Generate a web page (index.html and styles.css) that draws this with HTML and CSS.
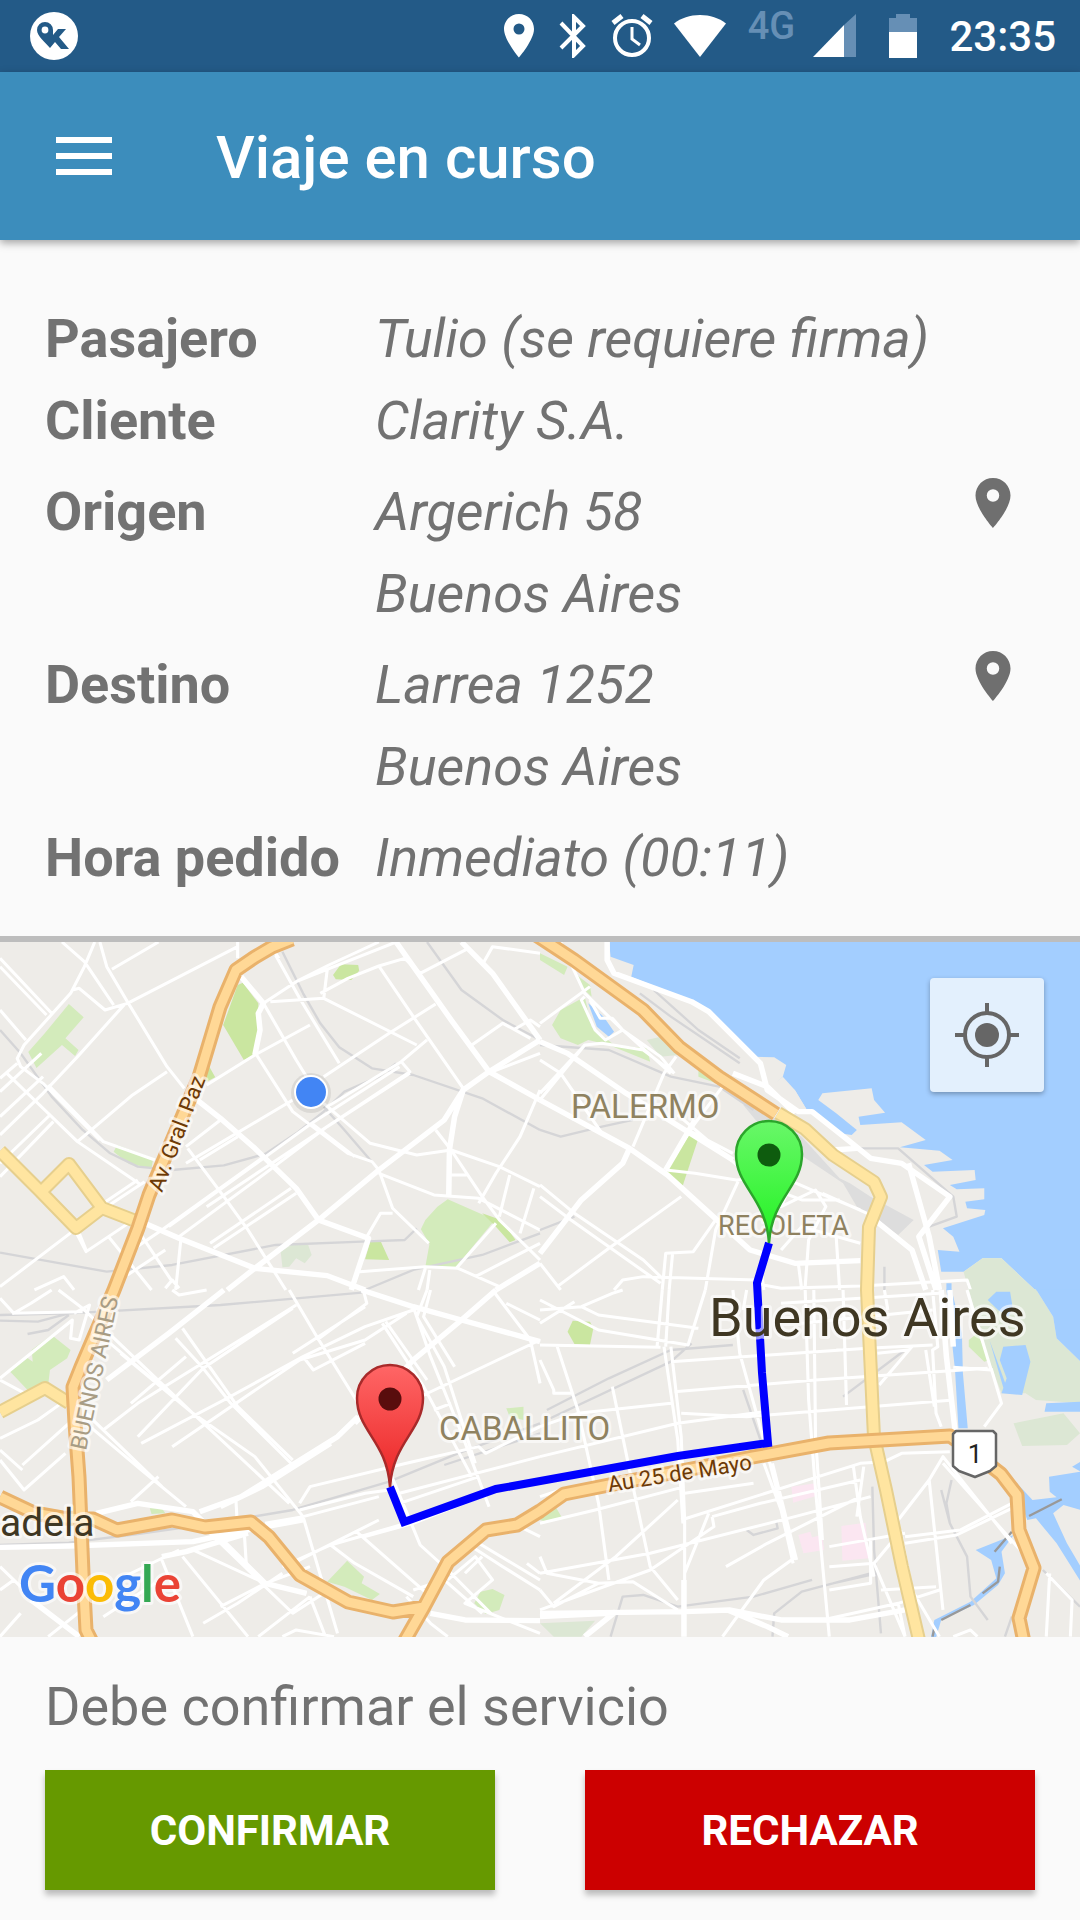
FILE: index.html
```
<!DOCTYPE html>
<html lang="es">
<head>
  <meta charset="UTF-8">
  <meta name="viewport" content="width=device-width, initial-scale=1">
  <title>Viaje en curso</title>
  <link rel="stylesheet" href="styles.css">
</head>
<body>
  <div class="statusbar">
    <svg class="app-logo" width="48" height="48" viewBox="0 0 48 48">
      <circle cx="24" cy="24" r="24" fill="#fff"/>
      <path fill="#235a87" d="M15 10a8 8 0 0 1 8 8v5l5-6h8l-7 8 10 12h-8l-6-7-5 6C15 30 7 24 7 18a8 8 0 0 1 8-8z"/>
      <circle cx="15" cy="18" r="3.400" fill="#fff"/>
    </svg>

    <div class="status-icons">
      <svg width="40" height="44" viewBox="0 0 40 44"><path fill="#fff" fill-rule="evenodd" d="M20 0C11.500 0 5 6.600 5 15c0 11 15 28.500 15 28.500S35 26 35 15C35 6.600 28.500 0 20 0zm0 20.500a5.500 5.500 0 1 1 0-11 5.500 5.500 0 0 1 0 11z"/></svg>
      <svg width="36" height="44" viewBox="0 0 36 44"><path fill="none" stroke="#fff" stroke-width="4" d="M6 9l22 23-9 9V3l9 9L6 34"/></svg>
      <svg width="48" height="44" viewBox="0 0 48 44"><g fill="none" stroke="#fff" stroke-width="4"><circle cx="25" cy="24" r="17"/><path stroke-width="5" d="M6 9l9-7M44 9l-9-7"/><path stroke-width="3" d="M25 13v12l8 6"/></g></svg>
      <svg width="58" height="44" viewBox="0 0 58 44"><path fill="#fff" d="M29 43L3 9.500C10 4 19 1 29 1s19 3 26 8.500z"/></svg>
      <span class="network">4G</span>
      <svg width="58" height="44" viewBox="0 0 58 44"><path fill="#668fb5" d="M31 11L43 0v43H31z"/><path fill="#fff" d="M0 43L31 11v32z"/></svg>
      <svg width="46" height="44" viewBox="0 0 46 44"><path fill="#668fb5" d="M2 4h7V0h14v4h7v14H2z"/><path fill="#fff" d="M2 18h28v26H2z"/></svg>
      <span class="clock">23:35</span>
    </div>
  </div>

  <header class="toolbar">
    <button class="menu" type="button" aria-label="Menú">
      <svg width="56" height="38" viewBox="0 0 56 38"><path fill="#fff" d="M0 0h56v6H0zM0 16h56v6H0zM0 32h56v6H0z"/></svg>
    </button>
    <h1>Viaje en curso</h1>
  </header>

  <main>
    <dl class="viaje">
      <div class="fila">
        <dt>Pasajero</dt>
        <dd>Tulio (se requiere firma)</dd>
      </div>
      <div class="fila">
        <dt>Cliente</dt>
        <dd>Clarity S.A.</dd>
      </div>
      <div class="fila separada">
        <dt>Origen</dt>
        <dd>Argerich 58<br>Buenos Aires</dd>
        <dd class="accion">
          <button class="ver-mapa" type="button" aria-label="Ver origen en el mapa">
            <svg width="60" height="60" viewBox="0 0 24 24"><path fill="#6f6f6f" d="M12 2C8.130 2 5 5.130 5 9c0 5.250 7 13 7 13s7-7.750 7-13c0-3.870-3.130-7-7-7zm0 9.500a2.500 2.500 0 0 1 0-5 2.500 2.500 0 0 1 0 5z"/></svg>
          </button>
        </dd>
      </div>
      <div class="fila separada">
        <dt>Destino</dt>
        <dd>Larrea 1252<br>Buenos Aires</dd>
        <dd class="accion">
          <button class="ver-mapa" type="button" aria-label="Ver destino en el mapa">
            <svg width="60" height="60" viewBox="0 0 24 24"><path fill="#6f6f6f" d="M12 2C8.130 2 5 5.130 5 9c0 5.250 7 13 7 13s7-7.750 7-13c0-3.870-3.130-7-7-7zm0 9.500a2.500 2.500 0 0 1 0-5 2.500 2.500 0 0 1 0 5z"/></svg>
          </button>
        </dd>
      </div>
      <div class="fila separada">
        <dt>Hora pedido</dt>
        <dd>Inmediato (00:11)</dd>
      </div>
    </dl>

    <section class="mapa">
      <svg class="plano" viewBox="0 942 1080 695" role="img" aria-label="Mapa del recorrido">
        <defs>
          <linearGradient id="verde" x1="0" y1="0" x2="0" y2="1">
            <stop offset="0" stop-color="#69f769"/><stop offset="1" stop-color="#22f322"/>
          </linearGradient>
          <linearGradient id="rojo" x1="0" y1="0" x2="0" y2="1">
            <stop offset="0" stop-color="#ff6666"/><stop offset="1" stop-color="#ea2424"/>
          </linearGradient>
        </defs>
        <rect y="930" width="1080" height="720" fill="#eeece8"/>

        <!-- noroeste -->
        <g transform="translate(0 930) scale(.3444 .3333)">
          <path class="parque" d="M200 222L243 262L190 325L228 360L218 378L180 345L106 414L82 366L130 310ZM340 645L445 685L440 714L375 702L330 665ZM1300 808L1437 870L1323 1012L1235 1010L1247 942L1222 898L1235 870L1270 830Z"/>
          <path class="reserva" d="M815 965L850 942L895 945L905 975L885 1000L860 985L840 1010L820 1012Z"/>
          <path class="plaza" d="M705 158L750 220L752 300L740 375L708 390L648 285L690 165ZM605 405L625 442L600 455L590 440ZM990 103L1040 105L1043 122L1020 150L975 148L967 135ZM1075 935L1105 933L1130 990L1060 988ZM1400 850L1455 870L1497 930L1480 937L1440 890Z"/>
          <path class="tren" d="M0 300L60 370L150 500L240 600L320 670L400 710L500 720L650 706L770 672L860 610L940 545L1000 485L1100 440L1150 400M820 65L880 190L930 280L985 352L1080 415L1200 435L1400 505L1568 600M1240 36L1340 180L1460 270L1568 330M940 530L1000 600L1100 720M0 968L310 1025L500 1005L800 945L1050 935L1175 930L1210 895M1060 1080L1200 1020L1400 975L1568 910"/>
          <path class="calle" d="M0 85L150 250M0 110L135 255M180 36L245 95L330 225M275 36L245 110L205 190L70 345L50 385L60 410L125 460L290 630M290 36L310 110L370 215L485 410L535 475M325 118L460 36M690 36L690 85M690 50L370 220L305 240L230 175L210 180M360 225L225 380L125 490L0 615M0 240L75 330M50 400L0 445M0 485L120 370M20 430L130 540L225 635L410 765M125 440L0 560M140 465L300 635L450 690M145 555L0 700M155 575L0 740M485 425L385 495L225 635M300 820L400 750M310 830L420 755M220 905L250 965L380 875M210 905L0 1070M230 910L250 960M315 920L440 1080M400 900L500 1055M525 930L510 1080M480 1075L500 1050L520 1075M100 1080L185 1040L215 1080"/>
          <path class="calle" d="M600 465L740 375L900 285M700 145L765 220L860 390L890 440M745 375L850 545L1010 670L1080 695L1100 720L1140 835L1245 940M800 75L870 205L985 400M810 85L800 70M785 215L940 205L1210 345M765 220L860 155L1150 36M860 155L955 105L1100 36M930 190L1010 145L1100 108L1175 85M950 120L940 205M1100 108L1200 260L1345 475M1220 130L1360 55M1175 85L1220 130M1265 222L1130 310L940 440M1240 330L1165 395L950 530M1165 395L1190 425L935 600L600 830M850 510L540 700M640 570L540 650M690 620L580 690M1160 410L905 580L490 890M1190 430L950 590L770 730L520 920M545 655L650 800L720 900L830 1080M845 775L610 940M860 790L620 955M760 685L470 900L370 970M940 520L1075 640L1210 675L1310 660M905 580L1030 680M1100 730L1260 795L1390 805L1568 900M1265 600L1310 660L1400 800L1450 870L1568 990M1310 660L1450 710L1568 770M1568 480L1510 620L1440 730L1390 820M1310 735L1355 735M1480 735L1450 860M1550 775L1510 910M1140 850L1105 850L1065 920M1045 1025L1235 1010L1330 1015L1450 1070M1440 880L1325 1015M1568 940L1380 1040M1235 1015L1215 1080M1248 1020L1240 1080M1370 345L1460 280L1540 325M1568 370L1430 425M1400 105L1430 50L1568 70M1490 300L1540 270L1568 290M370 1035L480 960"/>
          <path class="avenida" d="M1150 36L1310 270L1420 425L1568 510M1420 425L1345 480L1290 570L1100 720L925 870L740 1015L660 1080M560 500L640 565L740 655L860 775L925 870L1070 925L1020 1080M420 880L520 925L740 1015L950 1037L1060 1080M1345 480L1320 560L1305 660L1303 800M1420 425L1568 330M1340 36L1430 130L1568 330M700 140L765 220L750 250L755 300L740 375M1568 1000L1440 1080"/>
        </g>

        <!-- noreste -->
        <g transform="translate(540 930) scale(.3444 .3333)">
          <path class="agua" d="M200 30L205 80L272 105L265 140L360 180L440 215L490 240L540 290L620 380L680 382L715 405L705 440L680 465L740 480L775 540L870 610L905 615L920 600L860 550L808 510L820 490L963 475L970 510L1002 548L925 560L930 585L1050 577L1120 630L1045 652L1160 662L1198 690L1115 705L1140 725L1262 720L1265 750L1190 765L1210 778L1290 775L1290 808L1235 815L1240 835L1293 840L1290 855L1170 895L1200 920L1218 965L1155 960L1165 1025L1230 1025L1285 985L1340 985L1440 1082L1570 1082L1570 30Z"/>
          <path class="suelo" d="M675 465L705 440L740 480L775 540L720 530Z"/>
          <path class="reserva" d="M1230 1025L1285 985L1340 985L1440 1082L1245 1082ZM310 330L350 320L400 375L350 380Z"/>
          <path class="parque" d="M35 285L60 240L130 200L150 290L215 345L310 355L320 395L200 345L140 330L110 345L60 325ZM0 70L80 110L70 135L0 90ZM100 130L145 165L150 200L120 170ZM460 415L525 465L460 440Z"/>
          <path class="plaza" d="M435 610L463 615L412 775L365 730Z"/>
          <path class="agua" d="M140 220L185 260L215 305L200 320L165 290ZM1180 1060L1195 1060L1195 1080L1180 1080Z"/>
          <path class="industria" d="M590 525L620 520L760 620L870 745L900 760L960 800L1085 870L1040 915L920 830L880 760L750 670L650 600Z"/>
          <path class="tren" d="M0 345L200 360L380 440L520 470L620 540M290 190L380 260L580 400M330 180L460 300L580 385M0 600L60 620L180 590L270 570M0 900L100 860M860 655L1040 655L1200 800L1210 860L1130 890M1000 1010L1000 1080"/>
          <path class="calle" d="M0 280L145 170M0 390L60 430L180 610M0 490L130 345L180 340L300 360L390 430M130 200L120 210L160 300L190 330L240 300L350 380L390 430M60 36L130 190L240 300L380 430M145 210L175 265L210 265L240 300M395 380L360 430L270 650M0 510L130 345M60 430L10 480M365 715L450 580L530 470M400 555L600 730M430 600L560 670M365 720L450 730L570 750L700 740L800 785L930 840M410 800L200 955L50 1070M0 800L90 870L350 1060M0 765L100 850L300 990L360 1050M575 755L510 900L480 1080M355 1080L365 970L445 965L510 870M385 970L375 1080M215 1080L240 1050L300 1040L630 1050M620 1060L700 1075L930 1068L1240 1050L1250 1080M710 790L760 810L870 810M730 760L700 830L800 780L830 830L780 930L770 1070M820 790L950 850M750 1000L760 1080M860 920L870 1080M700 960L760 890L930 940M0 1000L60 1080M640 1000L650 1080"/>
          <path class="avenida" d="M195 36L195 90L215 130L440 215L490 245L640 400L660 480L750 545L790 545L900 635L960 685L1050 700L1190 800L1100 920L1150 1080M0 335L80 370L250 490L560 690M0 510L260 655L370 735L610 960L740 1000L930 992M260 655L240 700L120 810L60 890L0 970M450 570L365 720M1070 700L1130 920L1160 1080M960 860L1080 960L1120 1080M560 430L660 470L740 550M850 660L920 655"/>
        </g>

        <!-- suroeste -->
        <g transform="translate(0 1290) scale(.3444 .3333)">
          <path class="parque" d="M150 135L205 180L195 205L145 240L140 285L80 300L25 240L75 200L95 215L92 180ZM1008 812L1057 860L1050 880L1103 912L1080 930L1000 890L950 875ZM1395 905L1430 897L1465 915L1450 960L1410 972L1377 940ZM435 655L470 655L480 670L440 672ZM1470 355L1520 350L1520 390L1480 380Z"/>
          <path class="tren" d="M0 75L200 70L640 45L1050 8M0 92L110 95L200 70M80 132L140 120L200 75M0 765L200 758L400 732L620 700L850 660L1130 575L1330 490L1568 400M1290 525L1568 430"/>
          <path class="calle" d="M0 25L40 70L90 40L150 0M170 0L240 55L560 370L840 640M215 70L260 45L230 150L205 145L210 90L0 265M35 70L240 65M0 270L90 320M500 0L520 15L600 0M0 480L65 540M0 445L110 390L205 320M0 510L70 600L190 490M65 525L200 400M250 400L410 540L540 650M250 370L470 590M350 190L560 370L740 500L880 680L980 1030M510 145L590 235L670 340L845 520M530 115L690 350L850 510M320 160L480 300L560 370M300 420L400 340L860 45M400 440L590 235L850 55M410 460L650 330L880 200L1060 110L1200 60M380 340L540 200M840 0L920 140L1040 340M880 200L910 240L1060 160M500 470L870 210L1060 150L1180 70M1060 50L850 190M1055 0L1065 40L920 150M1110 100L1230 290L1370 560M1120 95L1240 270M1200 50L1250 200L1340 430L1420 650M1240 0L1210 80L1290 230L1380 520M1250 0L1230 80L1320 230M1200 330L1568 150M1430 0L1540 150L1568 280M870 640L900 590L1180 520L1390 470L1410 490L1568 410M1160 610L1568 500M1160 640L1390 560M870 660L1060 610L1130 600M770 700L880 680L1100 620M380 635L460 560M1060 740L1200 700L1420 610M850 820L1100 690M820 830L960 765L1180 700M960 765L1030 820L1200 920M1035 725L1250 920M1130 540L1220 765L1300 840L1430 975M1300 870L1380 800L1430 870L1350 940L1568 1030M1200 900L1290 870L1400 970M1180 920L1250 1000L1300 1040M1370 770L1460 830L1568 900M1390 760L1568 870M1350 850L1400 800M1530 820L1568 850M640 760L690 720L685 630M710 740L715 820M470 810L560 1040M600 720L850 970L940 910M530 800L720 1040M560 780L770 880L890 910M640 950L770 880L900 830M750 1040L900 920M900 920L945 1040M590 1000L690 940L820 850M0 830L90 920M0 900L40 870M0 1040L60 970M300 980L450 880M140 1040L250 950M340 870L520 780M820 1040L860 1020L970 1040M1260 360L1310 340M1470 40L1568 90M1490 700L1568 740"/>
          <path class="avenida" d="M310 270L490 130L650 0M0 772L200 768L560 755L720 720L880 690M580 665L700 620L840 530L980 440L1040 380M640 650L760 590L960 460M280 670L400 640L560 665L770 880L890 910M1050 0L1200 50L1340 90L1568 155M1440 0L1340 90L1200 210L1030 400M470 800L540 785L720 730M90 930L230 1040M1250 970L1350 990L1568 992"/>
        </g>

        <!-- sureste -->
        <g transform="translate(540 1290) scale(.3444 .3333)">
          <path class="reserva" d="M1245 -2L1440 -2L1490 80L1500 145L1570 215L1570 340L1440 330L1410 310L1340 310L1300 200ZM1375 400L1520 370L1568 430L1530 465L1400 468ZM0 1000L160 992L120 1040L40 1040Z"/>
          <path class="agua" d="M1440 -2L1490 80L1500 145L1570 215L1570 -2ZM1345 170L1410 165L1424 215L1400 315L1340 310L1355 265L1335 210ZM1300 30L1325 5L1365 5L1372 50L1360 80L1330 60ZM1305 150L1360 305L1350 310ZM1470 340L1570 335L1570 365L1465 365ZM1180 -2L1195 -2L1225 130L1228 250L1242 415L1215 415L1205 240ZM1340 530L1430 630L1500 622L1480 605L1478 560L1570 545L1545 530L1570 515L1570 660L1520 645L1490 670L1530 760L1570 830L1570 875L1500 760L1440 685L1415 690L1385 610ZM1265 780L1375 735L1340 785L1350 850L1330 885L1260 945L1165 990L1150 1042L1135 1042L1145 990L1250 935L1325 865L1310 810Z"/>
          <path class="parque" d="M1245 150L1270 130L1305 210L1290 215L1245 170ZM0 690L45 650L65 685L20 695Z"/>
          <path class="plaza" d="M95 92L145 95L155 115L145 165L100 162L80 125Z"/>
          <path class="hospital" d="M730 590L800 580L802 618L735 638ZM750 735L785 725L790 742L820 735L825 780L765 790ZM875 708L945 698L955 805L878 812Z"/>
          <path class="tren" d="M20 360L200 265L380 180L560 165M30 385L380 215L440 160M205 1040L240 920L300 915L400 950L620 920L790 870M675 1040L680 970L760 905L960 850M850 880L960 855M965 590L970 780L990 1030M1165 600L1190 700L1240 800L1250 920L1300 990M1195 570L1180 640L1190 700M600 720L620 735L690 715L685 690M590 300L640 450M880 320L1060 180M1460 840L1568 950M1370 980L1350 1040"/>
          <path class="muelle" d="M1420 678L1515 628M1320 785L1370 725M1335 830L1330 875L1285 910M1165 990L1250 945M1145 1015L1140 1040"/>
          <path class="calle" d="M0 30L170 120L430 165L480 0M120 50L210 10L240 0M0 60L120 50L170 75L460 115M0 100L100 35M0 165L350 172M0 210L40 300L40 310L90 310M50 170L110 360L170 640L200 870M340 170L355 0M365 170L375 0M360 170L400 450L415 700M380 170L410 440L420 690M560 0L580 190L650 450L740 810M600 0L590 60M0 410L110 370L380 340M380 215L950 175L1140 165M390 305L800 270L1300 235M410 370L600 380L1200 330M0 500L400 400L650 365M210 290L270 590L320 830L400 930M0 700L160 660L420 590M420 610L620 580M0 620L60 600M410 690L930 520L1000 515L1050 490L1190 485M500 680L640 640L930 570M770 0L780 330L800 600L840 1040M795 0L800 440L820 750M880 0L890 345M980 190L1070 180M760 100L1140 60M700 40L1160 10M1140 0L1155 170L1140 180L1150 370L1165 410M1120 180L1145 350M985 285L1080 170M1000 0L1010 60M1200 232L1310 240L1240 0M1310 235L1340 340L1290 410M1040 690L1130 570L1170 500L1370 760M1170 520L1420 810M1130 570L1170 960M910 530L930 680L970 860M940 530L920 680M930 620L660 760L540 830M650 520L700 660L735 820M675 520L745 810M490 670L420 850M500 680L505 710L320 840L0 960M0 850L320 790L740 680L960 620M0 800L20 850L170 880L270 875L400 960M0 900L40 950L170 880M40 940L220 800L400 630M420 690L420 870M1060 740L1220 720L1370 640M1060 760L1210 735L1370 655M840 830L970 820L1050 720M840 900L960 880L960 750M730 810L650 870L530 1040M840 770L1060 730M820 990L1040 940L1160 900M970 820L1060 1040M990 900L1150 890M1040 940L1060 1040M1480 850L1470 1040M1470 850L1545 930L1540 1040M1200 1040L1250 1020L1270 1040M860 180L880 180M1050 740L1080 900L1160 1040"/>
          <path class="avenida" d="M1165 0L1180 200L1205 420M0 970L420 965L550 960L700 990L900 990L1060 960M418 870L418 1040M0 980L200 970M545 960L660 1010L720 1040M220 965L130 1040M1190 0L1200 170"/>
        </g>

        <!-- rutas amarillas y autopistas: borde y relleno -->
        <g fill="none" stroke-linejoin="round">
          <path class="ruta-borde" d="M0 1151L41 1192L69 1164L102 1208L76 1228L41 1192M102 1208L133 1220M0 1412L45 1388L69 1403M778 1113L805 1129L833 1155L874 1182L881 1197L869 1227L867 1290L874 1437L886 1490L902 1567L919 1640"/>
          <path class="ruta" d="M0 1151L41 1192L69 1164L102 1208L76 1228L41 1192M102 1208L133 1220M0 1412L45 1388L69 1403M778 1113L805 1129L833 1155L874 1182L881 1197L869 1227L867 1290L874 1437L886 1490L902 1567L919 1640"/>
          <path class="autopista-borde" d="M292 939L272 947L255 957L236 970L220 1007L199 1077L149 1195L138 1228L114 1290L81 1367L73 1387L75 1423L79 1477L83 1573L86 1630L92 1642M0 1497L34 1513L62 1518L93 1519L117 1530L172 1520L205 1527L251 1522L269 1537L300 1575L348 1602L393 1612L424 1607L448 1562L486 1530L517 1525L540 1511L564 1494L609 1485L753 1457L829 1443L950 1436L974 1453L1001 1474L1017 1495L1019 1530L1034 1568L1019 1618L1024 1642M424 1607L404 1642M533 933L574 960L643 1010L679 1047L719 1077L776 1114"/>
          <path class="autopista" d="M292 939L272 947L255 957L236 970L220 1007L199 1077L149 1195L138 1228L114 1290L81 1367L73 1387L75 1423L79 1477L83 1573L86 1630L92 1642M0 1497L34 1513L62 1518L93 1519L117 1530L172 1520L205 1527L251 1522L269 1537L300 1575L348 1602L393 1612L424 1607L448 1562L486 1530L517 1525L540 1511L564 1494L609 1485L753 1457L829 1443L950 1436L974 1453L1001 1474L1017 1495L1019 1530L1034 1568L1019 1618L1024 1642M424 1607L404 1642M533 933L574 960L643 1010L679 1047L719 1077L776 1114"/>
        </g>

        <path class="recorrido" d="M769 1243L757 1283L762 1373L768 1443L678 1456L496 1489L404 1522L390 1487"/>

        <g class="rotulos">
          <text class="barrio" x="571" y="1118">PALERMO</text>
          <text class="barrio chico" x="718" y="1235">RECOLETA</text>
          <text class="barrio" x="439" y="1440">CABALLITO</text>
          <text class="ciudad" x="709" y="1336">Buenos Aires</text>
          <text class="localidad" x="0" y="1536">adela</text>
          <text class="via" transform="translate(162 1193) rotate(-69)">Av. Gral. Paz</text>
          <text class="limite" transform="translate(86 1451) rotate(-78)">BUENOS AIRES</text>
          <text class="via" transform="translate(609 1492) rotate(-9)">Au 25 de Mayo</text>
          <text class="google" x="19" y="1602"><tspan fill="#4285f4">G</tspan><tspan fill="#ea4335">o</tspan><tspan fill="#fbbc05">o</tspan><tspan fill="#4285f4">g</tspan><tspan fill="#34a853">l</tspan><tspan fill="#ea4335">e</tspan></text>
        </g>

        <path fill="#fff" stroke="#666" stroke-width="2.500" stroke-linejoin="round" d="M956 1431H993L996 1434V1466L990 1471L975 1477L959 1471L953 1466V1434Z"/>
        <text class="escudo" x="975" y="1463">1</text>

        <circle cx="311" cy="1093" r="20" fill="#000" opacity=".08"/>
        <circle cx="311" cy="1092" r="17" fill="#fff"/>
        <circle cx="311" cy="1092" r="15" fill="#4285f4"/>

        <g transform="translate(769 1155)">
          <path fill="url(#verde)" stroke="#2ba52b" stroke-width="2.500" d="M0 88C-3 42-33 32-33-1A33 33 0 0 1 33-1C33 32 3 42 0 88Z"/>
          <circle r="11.500" fill="#0e5c0e"/>
        </g>
        <g transform="translate(390 1399)">
          <path fill="url(#rojo)" stroke="#a82a2a" stroke-width="2.500" d="M0 88C-3 42-33 32-33-1A33 33 0 0 1 33-1C33 32 3 42 0 88Z"/>
          <circle r="11.500" fill="#590d0d"/>
        </g>
      </svg>

      <button class="mi-ubicacion" type="button" aria-label="Mi ubicación">
        <svg width="64" height="64" viewBox="0 0 64 64">
          <circle cx="32" cy="32" r="12" fill="#666"/>
          <circle cx="32" cy="32" r="22" fill="none" stroke="#666" stroke-width="4"/>
          <path stroke="#666" stroke-width="4" d="M32 0v9M32 55v9M0 32h9M55 32h9"/>
        </svg>
      </button>
    </section>

    <section class="confirmacion">
      <p>Debe confirmar el servicio</p>
      <div class="botones">
        <button class="boton confirmar" type="button">CONFIRMAR</button>
        <button class="boton rechazar" type="button">RECHAZAR</button>
      </div>
    </section>
  </main>
</body>
</html>
```
FILE: styles.css
```
* {
  box-sizing: border-box;
}

body {
  margin: 0;
  font-family: Roboto, "Liberation Sans", sans-serif;
  background: #fafafa;
  color: #727272;
}

button {
  border: none;
  background: none;
  padding: 0;
  font-family: inherit;
  cursor: pointer;
}

svg {
  display: block;
}

/* Barra de estado */
.statusbar {
  display: flex;
  justify-content: space-between;
  align-items: center;
  height: 72px;
  padding: 0 24px 0 30px;
  background: #235a87;
  color: #fff;
}

.status-icons {
  display: flex;
  align-items: center;
  gap: 16px;
}

.network {
  min-width: 52px;
  padding-bottom: 20px;
  font-size: 38px;
  font-weight: 500;
  line-height: 40px;
  text-align: center;
  color: #668fb5;
}

.clock {
  font-size: 42px;
  font-weight: 500;
}

/* Cabecera */
.toolbar {
  position: relative;
  display: flex;
  align-items: center;
  gap: 104px;
  height: 168px;
  padding: 0 56px;
  background: #3c8dbc;
  color: #fff;
  box-shadow: 0 3px 8px rgba(0, 0, 0, 0.35);
}

.toolbar h1 {
  margin: 0;
  padding-top: 2px;
  font-size: 60px;
  font-weight: 500;
}

/* Datos del viaje */
.viaje {
  margin: 0;
  padding: 58px 45px 37px;
  font-size: 54px;
  line-height: 82px;
}

.fila {
  display: grid;
  grid-template-columns: 330px 1fr auto;
}

.separada {
  margin-top: 9px;
}

.fila dt {
  font-weight: 700;
}

.fila dd {
  margin: 0;
  font-style: italic;
}

.ver-mapa {
  display: block;
  padding: 2px 12px;
}

/* Mapa */
.mapa {
  position: relative;
  border-top: 6px solid #bdbdbd;
}

.plano {
  width: 100%;
  height: auto;
}

.suelo { fill: #eeece8; }
.agua { fill: #a3ceff; }
.parque { fill: #d3ebbb; }
.plaza { fill: #cae6a0; }
.reserva { fill: #dce7d4; }
.industria { fill: #dddddd; }
.hospital { fill: #fbe6f1; }

.calle, .avenida, .tren, .muelle {
  fill: none;
  stroke: #fff;
  stroke-width: 9;
  stroke-linejoin: round;
}

.avenida { stroke-width: 16; }

.tren {
  stroke: #d5d5d7;
  stroke-width: 7;
}

.muelle {
  stroke: #999;
  stroke-width: 7;
}

.ruta-borde { stroke: #e6cf8d; stroke-width: 14; }
.ruta { stroke: #ffe5a0; stroke-width: 10; }
.autopista-borde { stroke: #e9b26b; stroke-width: 15; }
.autopista { stroke: #ffd896; stroke-width: 9; }

.recorrido {
  fill: none;
  stroke: #0000ff;
  stroke-width: 8;
}

.rotulos text {
  stroke: rgba(255, 255, 255, 0.6);
  stroke-width: 6px;
  stroke-linejoin: round;
  paint-order: stroke;
}

.rotulos .barrio {
  font-size: 33px;
  fill: #8f8260;
}

.rotulos .chico { font-size: 27px; }

.rotulos .ciudad {
  font-size: 54px;
  fill: #3f3723;
}

.rotulos .localidad {
  font-size: 39px;
  fill: #3f3723;
}

.rotulos .via {
  font-size: 22px;
  fill: #6d3a06;
}

.rotulos .limite {
  font-size: 23px;
  fill: #a89c84;
}

.rotulos .google {
  font-family: Lato, Roboto, sans-serif;
  font-size: 51px;
  font-weight: 700;
}

.escudo {
  font-size: 26px;
  text-anchor: middle;
  fill: #222;
}

.mi-ubicacion {
  position: absolute;
  top: 36px;
  right: 36px;
  display: flex;
  align-items: center;
  justify-content: center;
  width: 114px;
  height: 114px;
  border-radius: 4px;
  background: #e3f0fd;
  box-shadow: 0 2px 5px rgba(0, 0, 0, 0.3);
}

/* Confirmación */
.confirmacion {
  padding: 29px 45px 30px;
}

.confirmacion p {
  margin: 0 0 22px;
  font-size: 54px;
  line-height: 82px;
}

.botones {
  display: grid;
  grid-template-columns: 1fr 1fr;
  gap: 90px;
}

.boton {
  height: 120px;
  font-size: 42px;
  font-weight: 700;
  color: #fff;
  box-shadow: 0 5px 6px rgba(0, 0, 0, 0.25);
}

.confirmar { background: #669900; }
.rechazar { background: #cc0000; }
```
